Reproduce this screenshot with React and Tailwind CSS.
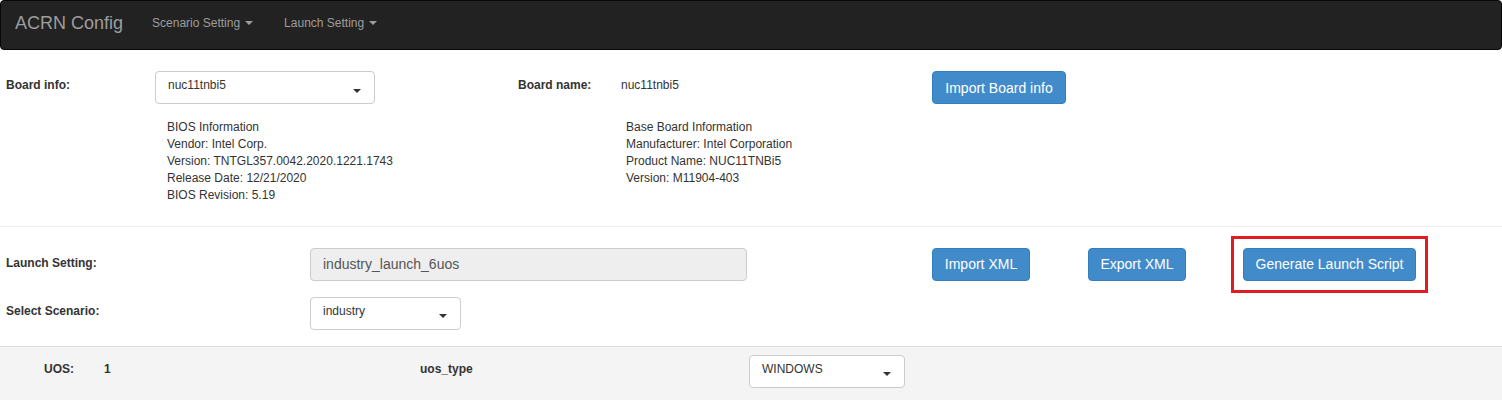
import React from "react";

function Caret({ className = "border-t-[#333]" }) {
  return (
    <span
      className={`inline-block w-0 h-0 border-x-[4px] border-x-transparent border-t-[4px] ${className}`}
    />
  );
}

function Select({ value, width, textClass = "text-[12px]" }) {
  return (
    <div
      className={`${width} h-[33px] shrink-0 bg-white border border-[#ccc] rounded-[4px] flex items-start justify-between pl-[12px] pr-[13px] pt-[5px]`}
    >
      <span className={`${textClass} leading-[17px] text-[#333]`}>{value}</span>
      <span className="self-center mt-[1px] flex">
        <Caret />
      </span>
    </div>
  );
}

function Button({ children, width, outlined }) {
  return (
    <div className="relative shrink-0">
      <button
        className={`${width} h-[33px] bg-[#428bca] border border-[#357ebd] rounded-[4px] text-white text-[14px] leading-[20px] flex items-center justify-center`}
      >
        {children}
      </button>
      {outlined && (
        <span className="absolute -left-[12px] -right-[12px] -top-[12px] -bottom-[12px] border-[3px] border-[#e31b23] pointer-events-none" />
      )}
    </div>
  );
}

const biosInfo = [
  "BIOS Information",
  "Vendor: Intel Corp.",
  "Version: TNTGL357.0042.2020.1221.1743",
  "Release Date: 12/21/2020",
  "BIOS Revision: 5.19",
];

const baseBoardInfo = [
  "Base Board Information",
  "Manufacturer: Intel Corporation",
  "Product Name: NUC11TNBi5",
  "Version: M11904-403",
];

export default function App() {
  return (
    <div className="min-h-[400px] bg-white text-[#333] font-['Liberation_Sans',Arial,sans-serif]">
      {/* Navbar */}
      <nav className="h-[50px] bg-[#222] border border-[#080808] rounded-[4px] flex items-center">
        <span className="pl-[14px] text-[18px] text-[#9d9d9d] leading-[20px] -mt-[4px]">ACRN Config</span>
        <div className="flex items-center gap-[31px] ml-[29px] -mt-[4px]">
          {["Scenario Setting", "Launch Setting"].map((item) => (
            <span key={item} className="flex items-center gap-[5px] text-[12px] text-[#9d9d9d] leading-[17px]">
              {item}
              <Caret className="border-t-[#9d9d9d]" />
            </span>
          ))}
        </div>
      </nav>

      {/* Board info */}
      <div className="flex pl-[6px] pt-[21px] text-[12px] leading-[17px]">
        <label className="w-[149px] shrink-0 pt-[5.5px] font-bold">Board info:</label>
        <div className="w-[363px] shrink-0">
          <Select value="nuc11tnbi5" width="w-[220px]" />
          <div className="ml-[12px] mt-[14.5px]">
            {biosInfo.map((line) => (
              <div key={line}>{line}</div>
            ))}
          </div>
        </div>
        <label className="w-[103px] shrink-0 pt-[5.5px] font-bold">Board name:</label>
        <div className="w-[311px] shrink-0">
          <div className="pt-[5.5px]">nuc11tnbi5</div>
          <div className="ml-[5px] mt-[25px]">
            {baseBoardInfo.map((line) => (
              <div key={line}>{line}</div>
            ))}
          </div>
        </div>
        <Button width="w-[134px]">Import Board info</Button>
      </div>

      <hr className="mt-[22px] border-0 border-t border-[#eee]" />

      {/* Launch setting */}
      <div className="pl-[6px] pt-[21px] pb-[16px] text-[12px] leading-[17px]">
        <div className="flex">
          <label className="w-[304px] shrink-0 pt-[7.5px] font-bold">Launch Setting:</label>
          <div className="w-[437px] h-[33px] shrink-0 bg-[#eee] border border-[#ccc] rounded-[4px] pl-[12px] pt-[5px]">
            <span className="text-[14px] leading-[20px] text-[#555]">industry_launch_6uos</span>
          </div>
          <div className="flex ml-[185px]">
            <Button width="w-[98px]">Import XML</Button>
            <div className="ml-[58px]">
              <Button width="w-[98px]">Export XML</Button>
            </div>
            <div className="ml-[57px]">
              <Button width="w-[173px]" outlined>
                Generate Launch Script
              </Button>
            </div>
          </div>
        </div>
        <div className="flex mt-[16px]">
          <label className="w-[304px] shrink-0 pt-[6.5px] font-bold">Select Scenario:</label>
          <Select value="industry" width="w-[151px]" />
        </div>
      </div>

      {/* UOS section */}
      <div className="h-[60px] bg-[#f4f4f4] border-t border-[#ddd] flex pl-[44px] pt-[8px] text-[12px] leading-[17px]">
        <span className="w-[60px] shrink-0 pt-[6px] font-bold">UOS:</span>
        <span className="w-[316px] shrink-0 pt-[6px] font-bold">1</span>
        <span className="w-[329px] shrink-0 pt-[6px] font-bold">uos_type</span>
        <Select value="WINDOWS" width="w-[156px]" />
      </div>
    </div>
  );
}
